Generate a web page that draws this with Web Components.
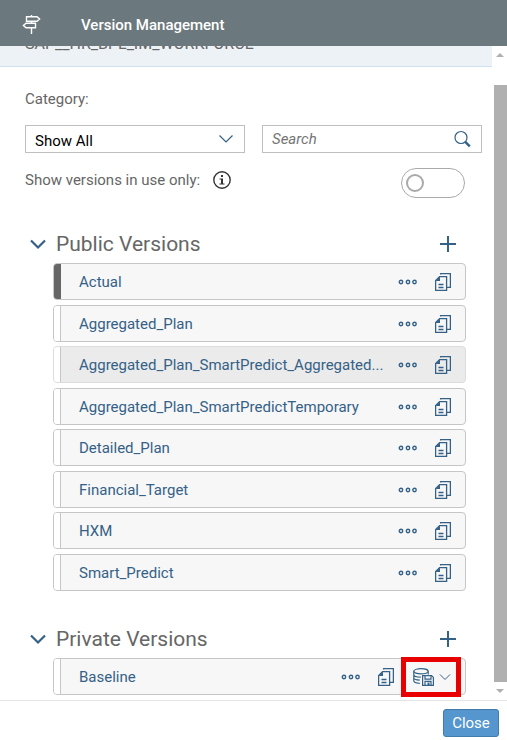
<!DOCTYPE html>
<html lang="en">
<head>
<meta charset="utf-8">
<title>Version Management</title>
<style>
  html, body { height: 100%; margin: 0; }
  body {
    background: #fff;
    color: #666;
    font: 15px/20px Roboto, "Noto Sans", sans-serif;
    --ink: #346187;
    --line: #bfbfbf;
  }
</style>
</head>
<body>
<version-dialog>
  <span slot="title">Version Management</span>
  <model-strip slot="content">SAP__HR_BPL_IM_WORKFORCE</model-strip>
  <version-filter slot="content"></version-filter>
  <version-section slot="content" heading="Public Versions">
    <version-row name="Actual" active></version-row>
    <version-row name="Aggregated_Plan"></version-row>
    <version-row name="Aggregated_Plan_SmartPredict_Aggregated..." hovered></version-row>
    <version-row name="Aggregated_Plan_SmartPredictTemporary"></version-row>
    <version-row name="Detailed_Plan"></version-row>
    <version-row name="Financial_Target"></version-row>
    <version-row name="HXM"></version-row>
    <version-row name="Smart_Predict"></version-row>
  </version-section>
  <version-section slot="content" heading="Private Versions">
    <version-row name="Baseline"><save-menu></save-menu></version-row>
  </version-section>
</version-dialog>

<script>
const define = (tag, render) => customElements.define(tag, class extends HTMLElement {
  connectedCallback() {
    if (this.shadowRoot) return;
    const template = document.createElement('template');
    template.innerHTML = render(this);
    this.attachShadow({ mode: 'open' }).append(template.content.cloneNode(true));
  }
});

const reset = `
  * { box-sizing: border-box; }
  button { display: flex; align-items: center; justify-content: center; margin: 0; padding: 0;
    border: 0; background: none; color: inherit; font: inherit; cursor: pointer; }
`;

const icons = {
  signpost: [20, 20, `<g fill="none" stroke="currentColor" stroke-width="1.400"><path d="M9.500 0v2M9.500 6.500v2M9.500 13v6"/><path d="M4.500 1.700h10.500l2.600 2.300-2.600 2.300H4.500zM13.500 8.200H4L1.400 10.500 4 12.800h9.500z"/></g>`],
  chevron: [16, 10, `<path d="M1.500 1.500 8 8l6.500-6.500" fill="none" stroke="currentColor" stroke-width="1.200"/>`],
  chevronBold: [18, 12, `<path d="m2 2.500 7 7 7-7" fill="none" stroke="currentColor" stroke-width="2.200"/>`],
  chevronSmall: [12, 8, `<path d="m1 1.500 5 5 5-5" fill="none" stroke="currentColor"/>`],
  search: [18, 18, `<g fill="none" stroke="currentColor"><circle cx="8" cy="7.500" r="6" stroke-width="1.200"/><path d="m12.300 11.800 4.500 4.500" stroke-width="2.400"/></g>`],
  info: [18, 18, `<circle cx="9" cy="9" r="8.200" fill="none" stroke="currentColor" stroke-width="1.400"/><path fill="currentColor" d="M8 4h2v2H8zM6.500 7.500H10v5h1.500v1h-5v-1H8v-4H6.500z"/>`],
  plus: [16, 16, `<path d="M8 0v16M0 8h16" stroke="currentColor" stroke-width="2"/>`],
  more: [20, 6, `<g fill="none" stroke="currentColor" stroke-width="1.400"><circle cx="3" cy="3" r="1.700"/><circle cx="10" cy="3" r="1.700"/><circle cx="16.500" cy="3" r="1.700"/></g>`],
  copy: [16, 18, `<g fill="none" stroke="currentColor" stroke-width="1.300"><path d="M4.600 3.600h7v13.800H.600V7.600z"/><path d="M5.600 1.600V.600h9.800v13.800h-3.800"/><path d="M3.500 11.500h5M3.500 14.500h5"/></g><path d="M.500 8 5 3.500V8z" fill="currentColor"/>`],
  dbsave: [21, 18, `<g fill="none" stroke="currentColor" stroke-width="1.200"><ellipse cx="8" cy="3.300" rx="7.200" ry="2.600"/><path d="M.800 3.300v9.500c0 1.300 2.500 2.300 6 2.500M.800 6.500c0 1.400 2.700 2.600 7 2.600M.800 9.800c0 1.200 2.500 2.200 6 2.400M15.200 3.300v3.200"/><path d="M9.600 7.600h9l1.800 1.800v8H9.600z"/><path d="M12 7.600v3.500h6V7.600M12 17.400v-4h6v4"/></g><path d="M14.500 14.500h2v2.500h-2z" fill="currentColor"/>`],
  up: [8, 4, `<path d="M0 4 4 0l4 4z" fill="currentColor"/>`],
  down: [8, 4, `<path d="m0 0 4 4 4-4z" fill="currentColor"/>`]
};

define('ui-icon', el => {
  const [w, h, shape] = icons[el.getAttribute('name')];
  return `<style>:host { display: inline-flex; flex: none; } svg { display: block; }</style>
    <svg width="${w}" height="${h}" viewBox="0 0 ${w} ${h}" aria-hidden="true">${shape}</svg>`;
});

define('version-dialog', () => `
  <style>${reset}
    :host { display: flex; flex-direction: column; height: 100vh; }
    header { display: flex; align-items: center; gap: 39px; flex: none; height: 46px; padding: 4px 22px 0;
      background: #6b787d; color: #fff; }
    h1 { margin: 0; font: inherit; font-weight: 500; }
    .view { display: flex; flex: 1; min-height: 0; }
    main { flex: 1; min-width: 0; overflow: auto; scrollbar-width: none; }
    footer { display: flex; justify-content: flex-end; flex: none; padding: 8px 8px 3px; border-top: 1px solid #e5e5e5; }
    footer button { width: 56px; height: 28px; border: 1px solid #427cac; border-radius: 3px;
      background: #5496cd; color: #fff; }
  </style>
  <header><ui-icon name="signpost"></ui-icon><h1><slot name="title"></slot></h1></header>
  <div class="view"><main><slot name="content"></slot></main><scroll-rail></scroll-rail></div>
  <footer><button type="button">Close</button></footer>
`);

define('scroll-rail', () => `
  <style>
    :host { display: flex; flex-direction: column; align-items: center; width: 15px; padding: 7px 0; gap: 7px;
      box-sizing: border-box; color: #b0b0b0; }
    .track { flex: 1; align-self: stretch; padding: 21px 0 0 2px; display: flex; }
    .thumb { flex: 1; background: #b0b0b0; }
  </style>
  <ui-icon name="up"></ui-icon><div class="track"><div class="thumb"></div></div><ui-icon name="down"></ui-icon>
`);

define('model-strip', () => `
  <style>
    :host { display: flex; align-items: flex-end; height: 21px; padding: 0 25px 12px; overflow: hidden;
      box-sizing: border-box; background: #edf2f7; border-bottom: 1px solid #cfe0ee; font-size: 16px; }
  </style>
  <slot></slot>
`);

define('version-filter', () => `
  <style>${reset}
    :host { display: block; padding: 22px 10px 26px 25px; }
    .fields { display: grid; grid-template-columns: 1fr 1fr; gap: 17px; margin: 16px 0 15px; }
    .field { display: grid; align-items: center; height: 28px; border: 1px solid var(--line); color: var(--ink); }
    .field > * { grid-area: 1 / 1; }
    .field ui-icon, .field button { justify-self: end; margin-right: 10px; pointer-events: none; }
    .field button ui-icon { margin: 0; }
    select, input[type=search] { width: 100%; height: 26px; margin: 0; padding: 0 36px 0 9px; border: 0;
      background: none; font: inherit; appearance: none; outline: 0; color: #000; }
    select { padding-top: 3px; }
    input::placeholder { color: #757575; font-style: italic; opacity: 1; }
    .toggle { display: flex; align-items: center; height: 30px; padding-right: 17px; }
    .toggle label { flex: none; margin-right: 13px; padding-bottom: 6px; }
    .toggle button { color: #333; margin-right: auto; padding-bottom: 6px; }
    input[type=checkbox] { appearance: none; display: flex; align-items: center; width: 64px; height: 30px; margin: 0;
      padding-left: 4px; border: 1px solid #aaa; border-radius: 15px; }
    input[type=checkbox]::before { content: ""; width: 18px; height: 18px; box-sizing: border-box;
      border: 2px solid #aaa; border-radius: 50%; }
    input[type=checkbox]:checked { justify-content: flex-end; padding: 0 4px 0 0; }
  </style>
  <label for="category">Category:</label>
  <div class="fields">
    <div class="field"><select id="category"><option>Show All</option></select><ui-icon name="chevron"></ui-icon></div>
    <div class="field"><input type="search" placeholder="Search" aria-label="Search"><button type="button" aria-label="Search"><ui-icon name="search"></ui-icon></button></div>
  </div>
  <div class="toggle">
    <label for="in-use">Show versions in use only:</label>
    <button type="button" aria-label="Information"><ui-icon name="info"></ui-icon></button>
    <input type="checkbox" role="switch" id="in-use">
  </div>
`);

define('version-section', el => `
  <style>${reset}
    :host { display: block; padding: 0 26px 24px 25px; }
    header { display: flex; align-items: center; height: 39px; padding: 0 10px 0 4px; }
    h2 { flex: 1; margin: 0; padding-left: 9px; font-size: 21px; line-height: 24px; font-weight: 400; }
    button { color: var(--ink); }
    .rows { display: grid; grid-auto-rows: 42px 41px; align-items: start; padding-left: 28px; }
  </style>
  <header>
    <button type="button" aria-label="Collapse"><ui-icon name="chevronBold"></ui-icon></button>
    <h2>${el.getAttribute('heading')}</h2>
    <button type="button" aria-label="Add"><ui-icon name="plus"></ui-icon></button>
  </header>
  <div class="rows"><slot></slot></div>
`);

define('version-row', el => `
  <style>${reset}
    :host { display: flex; align-items: center; height: 37px; box-sizing: border-box; min-width: 0; padding-right: 14px;
      border: 1px solid #c6c6c6; border-radius: 4px; background: #f7f7f7; color: var(--ink); }
    :host([hovered]) { background: #ebebeb; border-color: #dcdcdc; }
    .mark { flex: none; align-self: stretch; width: 7px; background: #fff; border-right: 1px solid #c6c6c6;
      border-radius: 3px 0 0 3px; }
    :host([active]) .mark { background: #666; border-color: #666; }
    .name { flex: 1; min-width: 0; padding-left: 18px; overflow: hidden; text-overflow: ellipsis; white-space: nowrap; }
    .more { margin: 0 17px 0 6px; }
  </style>
  <span class="mark"></span>
  <span class="name">${el.getAttribute('name')}</span>
  <button class="more" type="button" aria-label="More"><ui-icon name="more"></ui-icon></button>
  <button type="button" aria-label="Copy"><ui-icon name="copy"></ui-icon></button>
  <slot></slot>
`);

define('save-menu', () => `
  <style>${reset}
    :host { display: flex; position: relative; margin-left: 19px; }
    button { gap: 5px; }
    .frame { position: absolute; inset: -11px -10px -11px -12px; border: 5px solid #e90000; pointer-events: none; }
  </style>
  <button type="button" aria-label="Save options"><ui-icon name="dbsave"></ui-icon><ui-icon name="chevronSmall"></ui-icon></button>
  <span class="frame"></span>
`);
</script>
</body>
</html>
